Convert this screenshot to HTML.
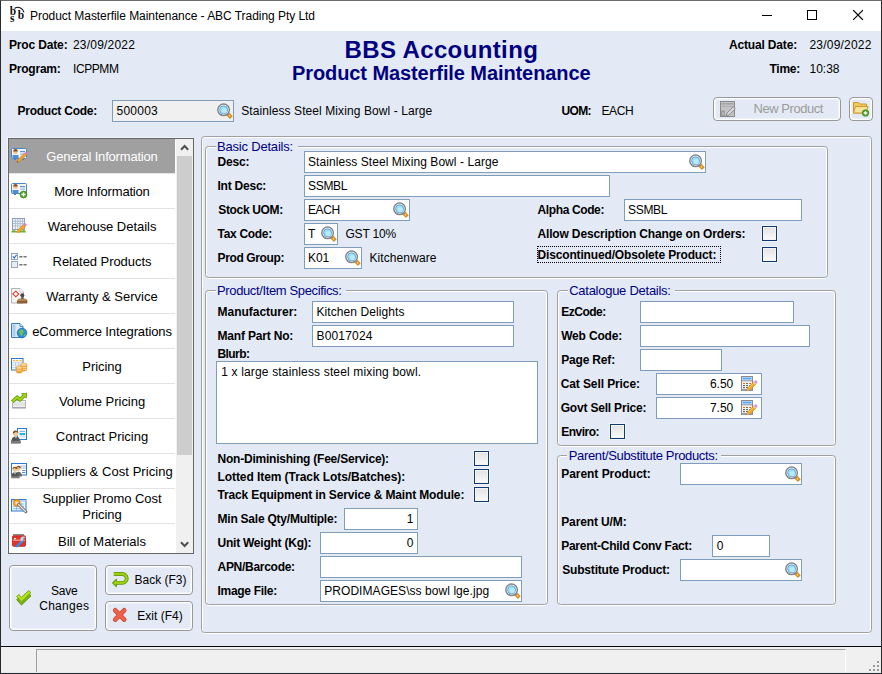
<!DOCTYPE html>
<html lang="en"><head><meta charset="utf-8"><title>Product Masterfile Maintenance - ABC Trading Pty Ltd</title>
<style>
html,body{margin:0;padding:0}
body{width:882px;height:674px;overflow:hidden;background:#E3EAF5;font-family:"Liberation Sans", sans-serif;position:relative}
#win{z-index:0;position:absolute;left:0;top:0;width:882px;height:674px;background:#E3EAF5;overflow:hidden}
#win>*{position:absolute}
#frame{left:0;top:0;width:880px;height:672px;border:1px solid #2a2a2a;border-top-color:#6a6a6a;box-sizing:content-box;pointer-events:none;z-index:9}
#tb{left:1px;top:1px;width:880px;height:30px;background:#fff}
.t{white-space:pre;margin:0}
.ic{overflow:visible}
.inp{box-sizing:border-box;background:#fff;border:1px solid #7F9DB9}
.btn{box-sizing:border-box;border:1px solid #989898;border-radius:4px;background:#E3EAF5;box-shadow:inset 0 0 0 1px #fff,inset 0 0 0 2px rgba(255,255,255,.35)}
.chk{box-sizing:border-box;width:15px;height:15px;border:1px solid #103A6E;background:linear-gradient(180deg,#E2E2E2,#FAFAFA);box-shadow:inset 0 0 0 1px #F7F3EF,0 0 0 1px rgba(255,255,255,.4)}
.grp{box-sizing:border-box;border:1px solid #A0A0A0;border-radius:3.5px}
.grp::before{content:"";position:absolute;left:0;top:0;right:0;bottom:-2px;border:1px solid #fff;border-radius:2.5px;z-index:-1}
.lgbg{height:2px;background:#E3EAF5}
.focus{box-sizing:border-box;border:1px dotted #000}
#list{left:8px;top:138px;width:186px;height:416px;box-sizing:border-box;border:1px solid #666;background:#fff;box-shadow:-1px -1px 0 0 #F1F5FA}
.row{left:9px;width:166px;background:#fff}
.row.sel{background:#A0A0A0}
.sep{left:9px;width:166px;height:1px;background:#E3E3E3}
#sb{left:176px;top:139px;width:17px;height:414px;background:#F0F0F0}
#thumb{left:177px;top:156px;width:15px;height:299px;background:#CDCDCD}
#status{left:1px;top:646px;width:880px;height:26px;background:#F0F0F0;border-top:1px solid #0a0a0a;box-sizing:border-box}
#stpanel{left:36px;top:649px;width:810px;height:23px;box-sizing:border-box;border-left:1px solid #A0A0A0;border-top:1px solid #A0A0A0;border-right:1px solid #fff}
</style></head>
<body><div id="win">
<div id="tb"></div>
<svg class="ic" style="left:8px;top:4px" width="20" height="22" viewBox="0 0 20 22" font-family="Liberation Serif, serif" font-weight="bold" fill="#111"><text x="1.700" y="10.800" font-size="11.500">b</text><text x="2" y="17.900" font-size="11.500">s</text><text x="9.700" y="14.900" font-size="11.500">b</text><path d="M6.500 4.500C10 2 14.500 3.500 16 8.300" fill="none" stroke="#111" stroke-width="1.100"/></svg>
<svg class="ic" style="left:755px;top:5px" width="120" height="22" viewBox="0 0 120 22"><path d="M7 10.500h10" stroke="#000" stroke-width="1"/><rect x="52.500" y="5.500" width="9" height="9" fill="none" stroke="#000"/><path d="M98.500 5.500l9 9M107.500 5.500l-9 9" stroke="#000" stroke-width="1.100" stroke-linecap="square"/></svg>
<div class="inp" style="left:112px;top:100px;width:122px;height:22px;background:#F0F0F0"></div>
<svg class="ic" style="left:217px;top:103px" width="16" height="16" viewBox="0 0 16 16"><path d="M10 10.200l2 2" stroke="#C9D3E0" stroke-width="2.600"/><path d="M12.300 9.900l3 3.300-2.300 2.400-3.200-3.200z" fill="#D48A22" stroke="#C27A18" stroke-width="0.600" stroke-linejoin="round"/><path d="M12.200 11.600l1.500 1.500-.900.900-1.500-1.500z" fill="#FFCB5C"/><circle cx="6.600" cy="6.800" r="5.800" fill="#fff" stroke="#858585" stroke-width="1.500"/><circle cx="6.600" cy="6.800" r="4" fill="#9FDDF6" stroke="#4E9EE4" stroke-width="0.900"/><circle cx="7.300" cy="7.600" r="2.600" fill="#B4ECFA"/></svg>
<div class="btn" style="left:713px;top:97px;width:128px;height:24px"></div>
<svg class="ic" style="left:720px;top:101px" width="16" height="16" viewBox="0 0 16 16"><rect x="0.500" y="0.500" width="14" height="15" fill="#C4C4C4" stroke="#8A8A8A"/><rect x="1.500" y="2" width="12" height="1.600" fill="#A4A4A4"/><path d="M1.500 5.500h12" stroke="#B0B0B0"/><rect x="1" y="9.500" width="4" height="5.500" fill="#9A9A9A"/><rect x="2.200" y="11" width="2" height="3" fill="#B8B8B8"/><path d="M6.200 15l.900-3 6.200-6.200 2 2-6.200 6.200z" fill="#D8D8D8" stroke="#7A7A7A" stroke-width="0.800"/></svg>
<div class="btn" style="left:849px;top:97px;width:24px;height:24px"></div>
<svg class="ic" style="left:853px;top:101px" width="17" height="16" viewBox="0 0 17 16"><path d="M0.500 1.500h5l1.500 1.500h6.500v9h-13z" fill="#F2C65A" stroke="#C99A2E"/><path d="M0.500 12l2-6.500h12.500l-2 6.500z" fill="#FBE29A" stroke="#C99A2E"/><circle cx="12.500" cy="12" r="3.300" fill="#4CA421" stroke="#2F7D12" stroke-width="0.600"/><path d="M10.700 12h3.600M12.500 10.200v3.600" stroke="#fff" stroke-width="1.300"/></svg>
<div id="list"></div>
<div class="row sel" style="top:139px;height:34px"></div>
<div class="sep" style="top:173px"></div>
<svg class="ic" style="left:11px;top:147px" width="16" height="16" viewBox="0 0 16 16"><rect x="0.5" y="1.5" width="15" height="10" rx="1" fill="#F2F7FD" stroke="#4A86C8"/><rect x="1.5" y="8" width="6" height="3.5" fill="#4F8DD6"/><circle cx="4.5" cy="5" r="2.3" fill="#F3C79B"/><path d="M2.2 4.4a2.3 2.3 0 0 1 4.6 0z" fill="#8A4B1F"/><rect x="9" y="4" width="5" height="1.2" fill="#5E8FCB"/><rect x="9" y="6.5" width="5" height="1.2" fill="#9DB9DC"/><rect x="3" y="11.5" width="2" height="1.5" fill="#4A86C8"/><rect x="11" y="11.5" width="2" height="1.5" fill="#4A86C8"/><path d="M6 15.5l.9-3 6.3-6.3 2.1 2.1L9 14.6z" fill="#F0A22E" stroke="#B87515" stroke-width="0.5"/><path d="M13.2 6.2l.9-.9a1 1 0 0 1 1.4 0l.5.5a1 1 0 0 1 0 1.4l-.9.9z" fill="#E77FC0"/><path d="M6 15.5l.45-1.5 1.05 1.05z" fill="#553"/></svg>
<div class="row" style="top:174px;height:34px"></div>
<div class="sep" style="top:208px"></div>
<svg class="ic" style="left:11px;top:182px" width="16" height="16" viewBox="0 0 16 16"><rect x="0.5" y="1.5" width="15" height="10" rx="1" fill="#F2F7FD" stroke="#4A86C8"/><rect x="1.5" y="8" width="6" height="3.5" fill="#4F8DD6"/><circle cx="4.5" cy="5" r="2.3" fill="#F3C79B"/><path d="M2.2 4.4a2.3 2.3 0 0 1 4.6 0z" fill="#8A4B1F"/><rect x="9" y="4" width="5" height="1.2" fill="#5E8FCB"/><rect x="9" y="6.5" width="5" height="1.2" fill="#9DB9DC"/><rect x="3" y="11.5" width="2" height="1.5" fill="#4A86C8"/><rect x="11" y="11.5" width="2" height="1.5" fill="#4A86C8"/><circle cx="12.5" cy="12.5" r="3.5" fill="#4CA421" stroke="#2F7D12" stroke-width="0.6"/><path d="M10.5 12.5h4M12.5 10.5v4" stroke="#fff" stroke-width="1.4"/></svg>
<div class="row" style="top:209px;height:34px"></div>
<div class="sep" style="top:243px"></div>
<svg class="ic" style="left:11px;top:217px" width="16" height="16" viewBox="0 0 16 16"><rect x="1.500" y="1.500" width="12" height="11" fill="#F4F7FC" stroke="#8CA0BC"/><path d="M2 4.200h11M2 6.600h11M2 9h11M4.400 2v10M6.800 2v10M9.200 2v10M11.600 2v10" stroke="#A8B8D4" stroke-width="0.900"/><path d="M0.300 15.400c.500-2.600 3-3 4.500-1.500l6 0c1.500-1.500 3.700-1 4.200 1.500z" fill="#6DB33A"/><path d="M6 15.900l.800-2.800 5.700-5.700 2 2-5.700 5.700z" fill="#F6A21E" stroke="#C87A10" stroke-width="0.500"/><path d="M12.500 7.400l.900-.900a1 1 0 0 1 1.400 0l.600.600a1 1 0 0 1 0 1.400l-.900.900z" fill="#E07FCC"/><path d="M6 15.900l.450-1.600 1.150 1.150z" fill="#E8C89A"/></svg>
<div class="row" style="top:244px;height:34px"></div>
<div class="sep" style="top:278px"></div>
<svg class="ic" style="left:11px;top:252px" width="16" height="16" viewBox="0 0 16 16"><rect x="0.500" y="1.500" width="6" height="6" fill="#fff" stroke="#8FA2BE"/><path d="M1.700 4.400l1.500 1.600 2.400-3.200" fill="none" stroke="#2E6FD0" stroke-width="1.200"/><rect x="0.500" y="9.500" width="6" height="6" fill="#E8EDF5" stroke="#9AA8BE"/><rect x="8.300" y="4" width="3.200" height="1.500" fill="#777"/><rect x="12.500" y="4" width="3.200" height="1.500" fill="#777"/><rect x="8.300" y="12" width="3.200" height="1.500" fill="#777"/><rect x="12.500" y="12" width="3.200" height="1.500" fill="#777"/></svg>
<div class="row" style="top:279px;height:34px"></div>
<div class="sep" style="top:313px"></div>
<svg class="ic" style="left:11px;top:287px" width="16" height="16" viewBox="0 0 16 16"><path d="M0.500 1.500h8.500l3.500 3.500v11h-12z" fill="#F4F4F4" stroke="#B4B4B4"/><path d="M9 1.500v3.500h3.500" fill="#fff" stroke="#C4C4C4" stroke-width="0.800"/><path d="M1.800 7l3-2.800 3 2.800-3 2.800z" fill="#fff" stroke="#E03A2E" stroke-width="1.100"/><circle cx="11.300" cy="8.300" r="2" fill="#4A4A4A"/><rect x="10.300" y="9" width="2" height="3.500" fill="#555"/><path d="M6.500 14.200c0-1.600 1.200-2.200 2.500-2.200h4.600c1.300 0 2.500.600 2.500 2.200z" fill="#C99560" stroke="#8A5A2A" stroke-width="0.600"/><rect x="6.200" y="14.200" width="9.800" height="1.900" fill="#9A6A38" stroke="#6A4520" stroke-width="0.500"/></svg>
<div class="row" style="top:314px;height:34px"></div>
<div class="sep" style="top:348px"></div>
<svg class="ic" style="left:11px;top:322px" width="16" height="16" viewBox="0 0 16 16"><path d="M0.500 1.500h8.500l3 3v11h-11.500z" fill="#DCEBFA" stroke="#3A7CC4"/><rect x="1.500" y="2.500" width="3" height="12" fill="#A9CDEE"/><path d="M9 1.500v3h3" fill="#F4FAFF" stroke="#3A7CC4" stroke-width="0.900"/><circle cx="11" cy="11" r="4.800" fill="#2E8CEA" stroke="#1E62B4" stroke-width="0.700"/><path d="M8.500 8.500c1.500-1.500 3.500-1 4 .500.500 1.500-1 2-1 3.500s-1.500 2-2 .500-2-2.500-1-4.500z" fill="#6CCB36"/><path d="M13.500 12.500c.800-.500 1.500.200 1 1.200s-1.500 1-1.500 0z" fill="#6CCB36"/></svg>
<div class="row" style="top:349px;height:34px"></div>
<div class="sep" style="top:383px"></div>
<svg class="ic" style="left:11px;top:357px" width="16" height="16" viewBox="0 0 16 16"><rect x="0.500" y="1.500" width="11.500" height="11.500" fill="#fff" stroke="#2C7AD0"/><rect x="2" y="3" width="2.200" height="1.300" fill="#F5B040"/><rect x="5.200" y="3" width="2.200" height="1.300" fill="#F5B040"/><rect x="8.400" y="3" width="2.200" height="1.300" fill="#F5B040"/><path d="M1 5.800h10.500M1 8.200h10.500M1 10.600h10.500M4.600 4.800v8M7.800 4.800v8" stroke="#A9C8EC" stroke-width="0.800"/><rect x="9.700" y="6" width="6" height="8" rx="1.800" fill="#F5A030" stroke="#E0851A" stroke-width="0.500"/><path d="M10.200 8.600h5M10.200 10.600h5M10.200 12.400h5" stroke="#FFE0B0" stroke-width="0.800"/><ellipse cx="12.700" cy="7" rx="2.600" ry="0.900" fill="#FFD590"/><rect x="5.200" y="9.200" width="6" height="6.800" rx="1.800" fill="#F5A030" stroke="#E0851A" stroke-width="0.500"/><path d="M5.700 11.800h5M5.700 13.700h5" stroke="#FFE0B0" stroke-width="0.800"/><ellipse cx="8.200" cy="10.200" rx="2.600" ry="0.900" fill="#FFD590"/></svg>
<div class="row" style="top:384px;height:34px"></div>
<div class="sep" style="top:418px"></div>
<svg class="ic" style="left:11px;top:392px" width="16" height="16" viewBox="0 0 16 16"><rect x="1.500" y="8.500" width="13" height="7.500" fill="#F4F4F4" stroke="#B8B8B8"/><path d="M2 11h12M2 13h12" stroke="#D0D0D0" stroke-width="0.900"/><rect x="1.500" y="15" width="13" height="1.300" fill="#A8A8A8"/><path d="M1.200 9.800l5-4.600 2.800 2.600 4.200-4.300" fill="none" stroke="#5E9208" stroke-width="3.600" stroke-linejoin="round"/><path d="M10 1.200l6-.400-.400 6z" fill="#5E9208"/><path d="M1.200 9.800l5-4.600 2.800 2.600 4.200-4.300" fill="none" stroke="#A4D816" stroke-width="2" stroke-linejoin="round"/><path d="M11.300 1.800l3.900-.300-.300 3.900z" fill="#A4D816"/></svg>
<div class="row" style="top:419px;height:34px"></div>
<div class="sep" style="top:453px"></div>
<svg class="ic" style="left:11px;top:427px" width="16" height="16" viewBox="0 0 16 16"><rect x="6.500" y="1.500" width="9" height="11" fill="#fff" stroke="#2C7AD0"/><rect x="8.500" y="3.800" width="5.500" height="1.200" fill="#7AB8F0"/><rect x="8.500" y="6" width="5.500" height="2.200" fill="#28B0E8"/><rect x="8.500" y="9.400" width="5.500" height="1" fill="#B8D4F0"/><circle cx="4.700" cy="6.800" r="2.700" fill="#F0C898"/><path d="M1.900 6.600a2.800 2.800 0 0 1 5.600-.600c-1.500-.200-2-1-2.500-1.500-.800 1-2 1.800-3.100 2.100z" fill="#7A4818"/><path d="M0.500 14c0-3 1.800-4.400 4.200-4.400s4.200 1.400 4.200 4.400z" fill="#555"/><path d="M3.700 9.800l1 2.500 1-2.500z" fill="#fff"/><path d="M4.500 10.300h.500v2.500h-.500z" fill="#222"/><rect x="0.200" y="13.800" width="9.300" height="2.400" fill="#7C7C7C" stroke="#5A5A5A" stroke-width="0.500"/></svg>
<div class="row" style="top:454px;height:34px"></div>
<div class="sep" style="top:488px"></div>
<svg class="ic" style="left:11px;top:462px" width="16" height="16" viewBox="0 0 16 16"><rect x="0.500" y="1.500" width="15" height="11.500" fill="#fff" stroke="#2C7AD0"/><path d="M9.500 4h1.200M11.500 4h1.200M13.500 4h1.200M9.500 6h1.200M11.500 6h1.200M13.500 6h1.200M11 8.500h3.500M11 10.500h3.500" stroke="#5C94D6" stroke-width="1"/><circle cx="7.500" cy="6.500" r="2.300" fill="#EEC090"/><path d="M5.100 6.300a2.400 2.400 0 0 1 4.800-.300c-1.800 0-2.600-.800-3-1.200-.500.800-1 1.200-1.800 1.500z" fill="#7A4818"/><path d="M4.300 14.500c0-3.200 1.400-4.800 3.300-4.800s3.300 1.600 3.300 4.800z" fill="#666"/><circle cx="4" cy="7.500" r="2.400" fill="#F0C898"/><path d="M1.500 7.300a2.500 2.500 0 0 1 5-.300c-1.800 0-2.700-.800-3.100-1.300-.500.900-1.100 1.300-1.900 1.600z" fill="#8A5520"/><path d="M0.300 15c0-3.200 1.500-4.700 3.700-4.700s3.700 1.500 3.700 4.700z" fill="#555"/><path d="M3.200 10.500l.800 2 .800-2z" fill="#fff"/><rect x="0.200" y="14.300" width="8.500" height="2" fill="#7C7C7C"/></svg>
<div class="row" style="top:489px;height:34px"></div>
<div class="sep" style="top:523px"></div>
<svg class="ic" style="left:11px;top:497px" width="16" height="16" viewBox="0 0 16 16"><rect x="0.500" y="2.500" width="14.500" height="11.500" fill="#EAF3FC" stroke="#2C7AD0"/><rect x="1" y="3" width="13.500" height="2" fill="#BBD8F4"/><path d="M2 7h11M2 9.300h11M2 11.600h11M5.500 5.500v8M10 5.500v8" stroke="#7FB0E6" stroke-width="0.800"/><circle cx="5.800" cy="6" r="3" fill="#FFC040" stroke="#F08A10" stroke-width="1.300"/><circle cx="5.800" cy="6" r="1.300" fill="#D8E4F0"/><path d="M7.500 7.500l7.300 7.300" stroke="#707070" stroke-width="3" stroke-linecap="round"/><path d="M7.500 7.500l7 7" stroke="#E8E8E8" stroke-width="1.200" stroke-linecap="round"/></svg>
<div class="row" style="top:524px;height:29px"></div>
<svg class="ic" style="left:11px;top:532px" width="16" height="16" viewBox="0 0 16 16"><rect x="2" y="2" width="11" height="1.600" fill="#8A8A8A"/><rect x="1.500" y="3.800" width="13" height="10.500" rx="1" fill="#E2322A" stroke="#B81C14" stroke-width="0.800"/><rect x="2" y="7.600" width="12" height="1.200" fill="#F8A098"/><rect x="3" y="6" width="2" height="1.300" fill="#fff"/><path d="M6.200 14.200l5-5" stroke="#2E8CEA" stroke-width="2.600" stroke-linecap="round"/><path d="M10.500 9.800a3 3 0 1 1 4.200-4.200l-2 .500-.300 1.700z" fill="#D0D8E4" stroke="#8A94A4" stroke-width="0.600"/></svg>
<div id="sb"></div><div id="thumb"></div>
<svg class="ic" style="left:177px;top:139px" width="16" height="17" viewBox="0 0 16 17"><path d="M4 10.800l3.600-3.800 3.600 3.800" fill="none" stroke="#505050" stroke-width="2"/></svg>
<svg class="ic" style="left:177px;top:536px" width="16" height="17" viewBox="0 0 16 17"><path d="M4 6.200l3.600 3.800 3.600-3.800" fill="none" stroke="#505050" stroke-width="2"/></svg>
<div class="btn" style="left:9px;top:565px;width:88px;height:66px"></div>
<svg class="ic" style="left:16px;top:590px" width="16" height="16" viewBox="0 0 16 16"><path d="M0.700 9.700L2.700 7.700 5.500 10.400 12.700 3.700 15 5.800 5.500 15Z" fill="#7DB30C" stroke="#5B8C06" stroke-width="0.900" stroke-linejoin="round"/><path d="M0.700 6.500L2.700 4.500 5.500 7.200 12.700 0.600 15 2.700 5.500 11.800Z" fill="#B2E31A" stroke="#6FA50A" stroke-width="0.900" stroke-linejoin="round"/></svg>
<div class="btn" style="left:105px;top:565px;width:88px;height:30px"></div>
<svg class="ic" style="left:112px;top:572px" width="16" height="16" viewBox="0 0 16 16"><g fill="none" stroke-linejoin="round"><path d="M1.800 2H10.300A4.400 4.400 0 0 1 10.300 10.800H4" stroke="#5E9208" stroke-width="3.800"/><path d="M0.300 10.900L4.400 6.900V14.900Z" fill="#5E9208" stroke="#5E9208" stroke-width="0.800"/><path d="M1.800 2H10.300A4.400 4.400 0 0 1 10.300 10.800H4" stroke="#9CD010" stroke-width="2.400"/><path d="M1.200 10.900L4 8.200V13.600Z" fill="#9CD010"/></g></svg>
<div class="btn" style="left:105px;top:601px;width:88px;height:30px"></div>
<svg class="ic" style="left:112px;top:607px" width="16" height="16" viewBox="0 0 16 16"><g stroke-linecap="round"><path d="M3.200 3.300L12.200 12.600M12.200 3.300L3.200 12.600" stroke="#C8402C" stroke-width="4.600"/><path d="M3.200 3.300L12.200 12.600M12.200 3.300L3.200 12.600" stroke="#F0604A" stroke-width="3.200"/></g></svg>
<div class="grp" style="left:201px;top:136px;width:671px;height:497px"></div>
<div class="grp" style="left:205px;top:146px;width:623px;height:132px"></div>
<div class="lgbg" style="left:216px;top:146px;width:82px"></div>
<div class="grp" style="left:205px;top:290px;width:343px;height:315px"></div>
<div class="lgbg" style="left:216px;top:290px;width:130px"></div>
<div class="grp" style="left:557px;top:290px;width:279px;height:156px"></div>
<div class="lgbg" style="left:568px;top:290px;width:107px"></div>
<div class="grp" style="left:557px;top:455px;width:279px;height:150px"></div>
<div class="lgbg" style="left:567px;top:455px;width:154px"></div>
<div class="inp " style="left:304px;top:151px;width:402px;height:22px"></div>
<svg class="ic" style="left:689px;top:154px" width="16" height="16" viewBox="0 0 16 16"><path d="M10 10.200l2 2" stroke="#C9D3E0" stroke-width="2.600"/><path d="M12.300 9.900l3 3.300-2.300 2.400-3.200-3.200z" fill="#D48A22" stroke="#C27A18" stroke-width="0.600" stroke-linejoin="round"/><path d="M12.200 11.600l1.500 1.500-.900.900-1.500-1.500z" fill="#FFCB5C"/><circle cx="6.600" cy="6.800" r="5.800" fill="#fff" stroke="#858585" stroke-width="1.500"/><circle cx="6.600" cy="6.800" r="4" fill="#9FDDF6" stroke="#4E9EE4" stroke-width="0.900"/><circle cx="7.300" cy="7.600" r="2.600" fill="#B4ECFA"/></svg>
<div class="inp " style="left:304px;top:175px;width:306px;height:22px"></div>
<div class="inp " style="left:304px;top:199px;width:106px;height:22px"></div>
<svg class="ic" style="left:393px;top:202px" width="16" height="16" viewBox="0 0 16 16"><path d="M10 10.200l2 2" stroke="#C9D3E0" stroke-width="2.600"/><path d="M12.300 9.900l3 3.300-2.300 2.400-3.200-3.200z" fill="#D48A22" stroke="#C27A18" stroke-width="0.600" stroke-linejoin="round"/><path d="M12.200 11.600l1.500 1.500-.900.900-1.500-1.500z" fill="#FFCB5C"/><circle cx="6.600" cy="6.800" r="5.800" fill="#fff" stroke="#858585" stroke-width="1.500"/><circle cx="6.600" cy="6.800" r="4" fill="#9FDDF6" stroke="#4E9EE4" stroke-width="0.900"/><circle cx="7.300" cy="7.600" r="2.600" fill="#B4ECFA"/></svg>
<div class="inp " style="left:304px;top:223px;width:34px;height:22px"></div>
<svg class="ic" style="left:320.5px;top:226px" width="16" height="16" viewBox="0 0 16 16"><path d="M10 10.200l2 2" stroke="#C9D3E0" stroke-width="2.600"/><path d="M12.300 9.900l3 3.300-2.300 2.400-3.200-3.200z" fill="#D48A22" stroke="#C27A18" stroke-width="0.600" stroke-linejoin="round"/><path d="M12.200 11.600l1.500 1.500-.900.900-1.500-1.500z" fill="#FFCB5C"/><circle cx="6.600" cy="6.800" r="5.800" fill="#fff" stroke="#858585" stroke-width="1.500"/><circle cx="6.600" cy="6.800" r="4" fill="#9FDDF6" stroke="#4E9EE4" stroke-width="0.900"/><circle cx="7.300" cy="7.600" r="2.600" fill="#B4ECFA"/></svg>
<div class="inp " style="left:304px;top:247px;width:58px;height:22px"></div>
<svg class="ic" style="left:345px;top:250px" width="16" height="16" viewBox="0 0 16 16"><path d="M10 10.200l2 2" stroke="#C9D3E0" stroke-width="2.600"/><path d="M12.300 9.900l3 3.300-2.300 2.400-3.200-3.200z" fill="#D48A22" stroke="#C27A18" stroke-width="0.600" stroke-linejoin="round"/><path d="M12.200 11.600l1.500 1.500-.900.900-1.500-1.500z" fill="#FFCB5C"/><circle cx="6.600" cy="6.800" r="5.800" fill="#fff" stroke="#858585" stroke-width="1.500"/><circle cx="6.600" cy="6.800" r="4" fill="#9FDDF6" stroke="#4E9EE4" stroke-width="0.900"/><circle cx="7.300" cy="7.600" r="2.600" fill="#B4ECFA"/></svg>
<div class="inp " style="left:624px;top:199px;width:178px;height:22px"></div>
<div class="chk" style="left:762px;top:226px"></div>
<div class="focus" style="left:537px;top:246px;width:184px;height:17px"></div>
<div class="chk" style="left:762px;top:247px"></div>
<div class="inp " style="left:312px;top:301px;width:202px;height:22px"></div>
<div class="inp " style="left:312px;top:325px;width:202px;height:22px"></div>
<div class="inp " style="left:216px;top:361px;width:322px;height:83px"></div>
<div class="chk" style="left:474px;top:451px"></div>
<div class="chk" style="left:474px;top:469px"></div>
<div class="chk" style="left:474px;top:487px"></div>
<div class="inp " style="left:344px;top:508px;width:74px;height:22px"></div>
<div class="inp " style="left:320px;top:532px;width:98px;height:22px"></div>
<div class="inp " style="left:320px;top:556px;width:202px;height:22px"></div>
<div class="inp " style="left:320px;top:580px;width:202px;height:22px"></div>
<svg class="ic" style="left:505px;top:583px" width="16" height="16" viewBox="0 0 16 16"><path d="M10 10.200l2 2" stroke="#C9D3E0" stroke-width="2.600"/><path d="M12.300 9.900l3 3.300-2.300 2.400-3.200-3.200z" fill="#D48A22" stroke="#C27A18" stroke-width="0.600" stroke-linejoin="round"/><path d="M12.200 11.600l1.500 1.500-.900.900-1.500-1.500z" fill="#FFCB5C"/><circle cx="6.600" cy="6.800" r="5.800" fill="#fff" stroke="#858585" stroke-width="1.500"/><circle cx="6.600" cy="6.800" r="4" fill="#9FDDF6" stroke="#4E9EE4" stroke-width="0.900"/><circle cx="7.300" cy="7.600" r="2.600" fill="#B4ECFA"/></svg>
<div class="inp " style="left:640px;top:301px;width:154px;height:22px"></div>
<div class="inp " style="left:640px;top:325px;width:170px;height:22px"></div>
<div class="inp " style="left:640px;top:349px;width:82px;height:22px"></div>
<div class="inp " style="left:656px;top:373px;width:106px;height:22px"></div>
<svg class="ic" style="left:741px;top:376px" width="17" height="16" viewBox="0 0 17 16"><rect x="0.500" y="0.500" width="11" height="14" fill="#F6F6F6" stroke="#8C8C8C"/><rect x="1" y="13" width="10" height="1.500" fill="#A0A0A0"/><rect x="1" y="1" width="10" height="3.400" fill="#A9D1FF"/><rect x="1" y="4.400" width="10" height="0.900" fill="#8C8C8C"/><rect x="2" y="2.200" width="8" height="0.900" fill="#4E96E6"/><g><rect x="2" y="6.900" width="2" height="1.100" fill="#F4701C"/><rect x="5" y="6.900" width="2" height="1.100" fill="#707070"/><rect x="8" y="6.900" width="2" height="1.100" fill="#F4701C"/><rect x="2" y="9" width="2" height="1.100" fill="#606060"/><rect x="5" y="9" width="2" height="1.100" fill="#606060"/><rect x="8" y="9" width="2" height="1.100" fill="#3E96F0"/><rect x="2" y="11.100" width="2" height="1.100" fill="#606060"/><rect x="5" y="11.100" width="2" height="1.100" fill="#606060"/></g><path d="M6.100 14.700l.700-2.900 6-6 2.200 2.200-6 6z" fill="#F6A21E" stroke="#C87A10" stroke-width="0.500"/><path d="M7.600 12.500l5.300-5.300" stroke="#FFD36A" stroke-width="0.900"/><path d="M12.200 6.400l.900-.900 2.200 2.200-.900.900z" fill="#D8D8D8"/><path d="M13.100 5.500l.800-.800a1.100 1.100 0 0 1 1.500 0l.700.700a1.100 1.100 0 0 1 0 1.500l-.800.800z" fill="#E07FCC"/><path d="M6.100 14.700l.450-1.700 1.250 1.250z" fill="#E8C89A"/></svg>
<div class="inp " style="left:656px;top:397px;width:106px;height:22px"></div>
<svg class="ic" style="left:741px;top:400px" width="17" height="16" viewBox="0 0 17 16"><rect x="0.500" y="0.500" width="11" height="14" fill="#F6F6F6" stroke="#8C8C8C"/><rect x="1" y="13" width="10" height="1.500" fill="#A0A0A0"/><rect x="1" y="1" width="10" height="3.400" fill="#A9D1FF"/><rect x="1" y="4.400" width="10" height="0.900" fill="#8C8C8C"/><rect x="2" y="2.200" width="8" height="0.900" fill="#4E96E6"/><g><rect x="2" y="6.900" width="2" height="1.100" fill="#F4701C"/><rect x="5" y="6.900" width="2" height="1.100" fill="#707070"/><rect x="8" y="6.900" width="2" height="1.100" fill="#F4701C"/><rect x="2" y="9" width="2" height="1.100" fill="#606060"/><rect x="5" y="9" width="2" height="1.100" fill="#606060"/><rect x="8" y="9" width="2" height="1.100" fill="#3E96F0"/><rect x="2" y="11.100" width="2" height="1.100" fill="#606060"/><rect x="5" y="11.100" width="2" height="1.100" fill="#606060"/></g><path d="M6.100 14.700l.700-2.900 6-6 2.200 2.200-6 6z" fill="#F6A21E" stroke="#C87A10" stroke-width="0.500"/><path d="M7.600 12.500l5.300-5.300" stroke="#FFD36A" stroke-width="0.900"/><path d="M12.200 6.400l.900-.900 2.200 2.200-.900.900z" fill="#D8D8D8"/><path d="M13.100 5.500l.800-.800a1.100 1.100 0 0 1 1.500 0l.700.700a1.100 1.100 0 0 1 0 1.500l-.800.800z" fill="#E07FCC"/><path d="M6.100 14.700l.450-1.700 1.250 1.250z" fill="#E8C89A"/></svg>
<div class="chk" style="left:610px;top:424px"></div>
<div class="inp " style="left:680px;top:463px;width:122px;height:22px"></div>
<svg class="ic" style="left:785px;top:466px" width="16" height="16" viewBox="0 0 16 16"><path d="M10 10.200l2 2" stroke="#C9D3E0" stroke-width="2.600"/><path d="M12.300 9.900l3 3.300-2.300 2.400-3.200-3.200z" fill="#D48A22" stroke="#C27A18" stroke-width="0.600" stroke-linejoin="round"/><path d="M12.200 11.600l1.500 1.500-.900.900-1.500-1.500z" fill="#FFCB5C"/><circle cx="6.600" cy="6.800" r="5.800" fill="#fff" stroke="#858585" stroke-width="1.500"/><circle cx="6.600" cy="6.800" r="4" fill="#9FDDF6" stroke="#4E9EE4" stroke-width="0.900"/><circle cx="7.300" cy="7.600" r="2.600" fill="#B4ECFA"/></svg>
<div class="inp " style="left:712px;top:535px;width:58px;height:22px"></div>
<div class="inp " style="left:680px;top:559px;width:122px;height:22px"></div>
<svg class="ic" style="left:785px;top:562px" width="16" height="16" viewBox="0 0 16 16"><path d="M10 10.200l2 2" stroke="#C9D3E0" stroke-width="2.600"/><path d="M12.300 9.900l3 3.300-2.300 2.400-3.200-3.200z" fill="#D48A22" stroke="#C27A18" stroke-width="0.600" stroke-linejoin="round"/><path d="M12.200 11.600l1.500 1.500-.900.900-1.500-1.500z" fill="#FFCB5C"/><circle cx="6.600" cy="6.800" r="5.800" fill="#fff" stroke="#858585" stroke-width="1.500"/><circle cx="6.600" cy="6.800" r="4" fill="#9FDDF6" stroke="#4E9EE4" stroke-width="0.900"/><circle cx="7.300" cy="7.600" r="2.600" fill="#B4ECFA"/></svg>
<div id="status"></div><div id="stpanel"></div>
<svg class="ic" style="left:868px;top:660px" width="13" height="13" viewBox="0 0 13 13"><g fill="#9A9A9A"><rect x="9" y="1" width="2" height="2"/><rect x="5" y="5" width="2" height="2"/><rect x="9" y="5" width="2" height="2"/><rect x="1" y="9" width="2" height="2"/><rect x="5" y="9" width="2" height="2"/><rect x="9" y="9" width="2" height="2"/></g></svg>
<div class="t" id="t0" style="top:9px;height:14px;line-height:14px;font-size:12px;color:#000;letter-spacing:-0.048px;left:30px;">Product Masterfile Maintenance - ABC Trading Pty Ltd</div>
<div class="t" id="t1" style="top:38px;height:14px;line-height:14px;font-size:12px;color:#000;font-weight:bold;letter-spacing:-0.153px;left:9px;">Proc Date:</div>
<div class="t" id="t2" style="top:38px;height:14px;line-height:14px;font-size:12px;color:#000;letter-spacing:0.194px;left:73px;">23/09/2022</div>
<div class="t" id="t3" style="top:62px;height:14px;line-height:14px;font-size:12px;color:#000;font-weight:bold;letter-spacing:-0.218px;left:9px;">Program:</div>
<div class="t" id="t4" style="top:62px;height:14px;line-height:14px;font-size:12px;color:#000;letter-spacing:-0.417px;left:73px;">ICPPMM</div>
<div class="t" id="t5" style="top:36px;height:27px;line-height:27px;font-size:24px;color:#000080;font-weight:bold;transform:translateY(-0.5px);letter-spacing:0.376px;left:344.5px;">BBS Accounting</div>
<div class="t" id="t6" style="top:62px;height:22px;line-height:22px;font-size:20px;color:#000080;font-weight:bold;transform:translateY(-0.5px);letter-spacing:-0.090px;left:292px;">Product Masterfile Maintenance</div>
<div class="t" id="t7" style="top:38px;height:14px;line-height:14px;font-size:12px;color:#000;font-weight:bold;letter-spacing:-0.168px;left:729px;">Actual Date:</div>
<div class="t" id="t8" style="top:38px;height:14px;line-height:14px;font-size:12px;color:#000;letter-spacing:0.194px;left:809.5px;">23/09/2022</div>
<div class="t" id="t9" style="top:62px;height:14px;line-height:14px;font-size:12px;color:#000;font-weight:bold;letter-spacing:-0.259px;left:769.5px;">Time:</div>
<div class="t" id="t10" style="top:62px;height:14px;line-height:14px;font-size:12px;color:#000;letter-spacing:-0.006px;left:809.5px;">10:38</div>
<div class="t" id="t11" style="top:104px;height:14px;line-height:14px;font-size:12px;color:#000;font-weight:bold;letter-spacing:-0.244px;left:17.5px;">Product Code:</div>
<div class="t" id="t12" style="top:104px;height:14px;line-height:14px;font-size:12px;color:#000;letter-spacing:0.242px;left:116.5px;">500003</div>
<div class="t" id="t13" style="top:104px;height:14px;line-height:14px;font-size:12px;color:#000;letter-spacing:0.083px;left:241.25px;">Stainless Steel Mixing Bowl - Large</div>
<div class="t" id="t14" style="top:104px;height:14px;line-height:14px;font-size:12px;color:#000;font-weight:bold;letter-spacing:-0.650px;left:561.5px;">UOM:</div>
<div class="t" id="t15" style="top:104px;height:14px;line-height:14px;font-size:12px;color:#000;letter-spacing:-0.361px;left:601.4px;">EACH</div>
<div class="t" id="t16" style="top:101px;height:15px;line-height:15px;font-size:13px;color:#9B9B9B;letter-spacing:-0.457px;left:753.5px;">New Product</div>
<div class="t" id="t17" style="top:149px;height:15px;line-height:15px;font-size:13px;color:#fff;letter-spacing:-0.190px;left:-48px;width:300px;text-align:center;">General Information</div>
<div class="t" id="t18" style="top:184px;height:15px;line-height:15px;font-size:13px;color:#000;letter-spacing:-0.185px;left:-48px;width:300px;text-align:center;">More Information</div>
<div class="t" id="t19" style="top:219px;height:15px;line-height:15px;font-size:13px;color:#000;letter-spacing:-0.039px;left:-48px;width:300px;text-align:center;">Warehouse Details</div>
<div class="t" id="t20" style="top:254px;height:15px;line-height:15px;font-size:13px;color:#000;letter-spacing:-0.052px;left:-48px;width:300px;text-align:center;">Related Products</div>
<div class="t" id="t21" style="top:289px;height:15px;line-height:15px;font-size:13px;color:#000;letter-spacing:-0.011px;left:-48px;width:300px;text-align:center;">Warranty &amp; Service</div>
<div class="t" id="t22" style="top:324px;height:15px;line-height:15px;font-size:13px;color:#000;letter-spacing:-0.120px;left:-48px;width:300px;text-align:center;">eCommerce Integrations</div>
<div class="t" id="t23" style="top:359px;height:15px;line-height:15px;font-size:13px;color:#000;letter-spacing:-0.036px;left:-48px;width:300px;text-align:center;">Pricing</div>
<div class="t" id="t24" style="top:394px;height:15px;line-height:15px;font-size:13px;color:#000;letter-spacing:-0.037px;left:-48px;width:300px;text-align:center;">Volume Pricing</div>
<div class="t" id="t25" style="top:429px;height:15px;line-height:15px;font-size:13px;color:#000;letter-spacing:-0.005px;left:-48px;width:300px;text-align:center;">Contract Pricing</div>
<div class="t" id="t26" style="top:464px;height:15px;line-height:15px;font-size:13px;color:#000;letter-spacing:0.060px;left:-48px;width:300px;text-align:center;">Suppliers &amp; Cost Pricing</div>
<div class="t" id="t27" style="top:491px;height:15px;line-height:15px;font-size:13px;color:#000;letter-spacing:-0.045px;left:-48px;width:300px;text-align:center;">Supplier Promo Cost</div>
<div class="t" id="t28" style="top:507px;height:15px;line-height:15px;font-size:13px;color:#000;letter-spacing:-0.036px;left:-48px;width:300px;text-align:center;">Pricing</div>
<div class="t" id="t29" style="top:534px;height:15px;line-height:15px;font-size:13px;color:#000;letter-spacing:-0.020px;left:-48px;width:300px;text-align:center;">Bill of Materials</div>
<div class="t" id="t30" style="top:584px;height:14px;line-height:14px;font-size:12px;color:#000;letter-spacing:-0.290px;left:-85.8px;width:300px;text-align:center;">Save</div>
<div class="t" id="t31" style="top:599px;height:14px;line-height:14px;font-size:12px;color:#000;letter-spacing:0.265px;left:-85.8px;width:300px;text-align:center;">Changes</div>
<div class="t" id="t32" style="top:573px;height:14px;line-height:14px;font-size:12px;color:#000;left:10.5px;width:300px;text-align:center;">Back (F3)</div>
<div class="t" id="t33" style="top:609px;height:14px;line-height:14px;font-size:12px;color:#000;left:10px;width:300px;text-align:center;">Exit (F4)</div>
<div class="t" id="t34" style="top:139px;height:15px;line-height:15px;font-size:13px;color:#000080;letter-spacing:-0.196px;left:217px;">Basic Details:</div>
<div class="t" id="t35" style="top:283px;height:15px;line-height:15px;font-size:13px;color:#000080;letter-spacing:-0.368px;left:217px;">Product/Item Specifics:</div>
<div class="t" id="t36" style="top:283px;height:15px;line-height:15px;font-size:13px;color:#000080;letter-spacing:-0.263px;left:569.2px;">Catalogue Details:</div>
<div class="t" id="t37" style="top:448px;height:15px;line-height:15px;font-size:13px;color:#000080;letter-spacing:-0.343px;left:568.7px;">Parent/Substitute Products:</div>
<div class="t" id="t38" style="top:155px;height:14px;line-height:14px;font-size:12px;color:#000;font-weight:bold;letter-spacing:-0.198px;left:217.5px;">Desc:</div>
<div class="t" id="t39" style="top:179px;height:14px;line-height:14px;font-size:12px;color:#000;font-weight:bold;letter-spacing:-0.232px;left:217.5px;">Int Desc:</div>
<div class="t" id="t40" style="top:203px;height:14px;line-height:14px;font-size:12px;color:#000;font-weight:bold;letter-spacing:-0.342px;left:218.25px;">Stock UOM:</div>
<div class="t" id="t41" style="top:227px;height:14px;line-height:14px;font-size:12px;color:#000;font-weight:bold;letter-spacing:-0.303px;left:217.5px;">Tax Code:</div>
<div class="t" id="t42" style="top:251px;height:14px;line-height:14px;font-size:12px;color:#000;font-weight:bold;letter-spacing:-0.370px;left:217.5px;">Prod Group:</div>
<div class="t" id="t43" style="top:155px;height:14px;line-height:14px;font-size:12px;color:#000;letter-spacing:0.069px;left:308px;">Stainless Steel Mixing Bowl - Large</div>
<div class="t" id="t44" style="top:179px;height:14px;line-height:14px;font-size:12px;color:#000;letter-spacing:-0.297px;left:308px;">SSMBL</div>
<div class="t" id="t45" style="top:203px;height:14px;line-height:14px;font-size:12px;color:#000;letter-spacing:-0.411px;left:308px;">EACH</div>
<div class="t" id="t46" style="top:227px;height:14px;line-height:14px;font-size:12px;color:#000;left:308px;">T</div>
<div class="t" id="t47" style="top:227px;height:14px;line-height:14px;font-size:12px;color:#000;letter-spacing:-0.173px;left:345.4px;">GST 10%</div>
<div class="t" id="t48" style="top:251px;height:14px;line-height:14px;font-size:12px;color:#000;letter-spacing:-0.053px;left:308px;">K01</div>
<div class="t" id="t49" style="top:251px;height:14px;line-height:14px;font-size:12px;color:#000;letter-spacing:0.087px;left:369.5px;">Kitchenware</div>
<div class="t" id="t50" style="top:203px;height:14px;line-height:14px;font-size:12px;color:#000;font-weight:bold;letter-spacing:-0.379px;left:537.5px;">Alpha Code:</div>
<div class="t" id="t51" style="top:203px;height:14px;line-height:14px;font-size:12px;color:#000;letter-spacing:-0.297px;left:628px;">SSMBL</div>
<div class="t" id="t52" style="top:227px;height:14px;line-height:14px;font-size:12px;color:#000;font-weight:bold;letter-spacing:-0.160px;left:537.5px;">Allow Description Change on Orders:</div>
<div class="t" id="t53" style="top:248px;height:14px;line-height:14px;font-size:12px;color:#000;font-weight:bold;letter-spacing:-0.154px;left:537.5px;">Discontinued/Obsolete Product:</div>
<div class="t" id="t54" style="top:305px;height:14px;line-height:14px;font-size:12px;color:#000;font-weight:bold;letter-spacing:-0.017px;left:217.5px;">Manufacturer:</div>
<div class="t" id="t55" style="top:305px;height:14px;line-height:14px;font-size:12px;color:#000;letter-spacing:0.080px;left:316.5px;">Kitchen Delights</div>
<div class="t" id="t56" style="top:329px;height:14px;line-height:14px;font-size:12px;color:#000;font-weight:bold;letter-spacing:-0.185px;left:217.5px;">Manf Part No:</div>
<div class="t" id="t57" style="top:329px;height:14px;line-height:14px;font-size:12px;color:#000;letter-spacing:0.171px;left:316.5px;">B0017024</div>
<div class="t" id="t58" style="top:347px;height:14px;line-height:14px;font-size:12px;color:#000;font-weight:bold;letter-spacing:-0.571px;left:217.5px;">Blurb:</div>
<div class="t" id="t59" style="top:365px;height:14px;line-height:14px;font-size:12px;color:#000;letter-spacing:0.155px;left:221.25px;">1 x large stainless steel mixing bowl.</div>
<div class="t" id="t60" style="top:452px;height:14px;line-height:14px;font-size:12px;color:#000;font-weight:bold;letter-spacing:-0.221px;left:217.5px;">Non-Diminishing (Fee/Service):</div>
<div class="t" id="t61" style="top:470px;height:14px;line-height:14px;font-size:12px;color:#000;font-weight:bold;letter-spacing:-0.074px;left:217.5px;">Lotted Item (Track Lots/Batches):</div>
<div class="t" id="t62" style="top:488px;height:14px;line-height:14px;font-size:12px;color:#000;font-weight:bold;letter-spacing:-0.142px;left:217.5px;">Track Equipment in Service &amp; Maint Module:</div>
<div class="t" id="t63" style="top:512px;height:14px;line-height:14px;font-size:12px;color:#000;font-weight:bold;letter-spacing:-0.227px;left:217.5px;">Min Sale Qty/Multiple:</div>
<div class="t" id="t64" style="top:512px;height:14px;line-height:14px;font-size:12px;color:#000;right:468.5px;">1</div>
<div class="t" id="t65" style="top:536px;height:14px;line-height:14px;font-size:12px;color:#000;font-weight:bold;letter-spacing:-0.233px;left:217.5px;">Unit Weight (Kg):</div>
<div class="t" id="t66" style="top:536px;height:14px;line-height:14px;font-size:12px;color:#000;right:468.5px;">0</div>
<div class="t" id="t67" style="top:560px;height:14px;line-height:14px;font-size:12px;color:#000;font-weight:bold;letter-spacing:-0.282px;left:217.5px;">APN/Barcode:</div>
<div class="t" id="t68" style="top:584px;height:14px;line-height:14px;font-size:12px;color:#000;font-weight:bold;letter-spacing:-0.299px;left:217.5px;">Image File:</div>
<div class="t" id="t69" style="top:584px;height:14px;line-height:14px;font-size:12px;color:#000;letter-spacing:0.062px;left:324.2px;">PRODIMAGES\ss bowl lge.jpg</div>
<div class="t" id="t70" style="top:305px;height:14px;line-height:14px;font-size:12px;color:#000;font-weight:bold;letter-spacing:-0.486px;left:561.2px;">EzCode:</div>
<div class="t" id="t71" style="top:329px;height:14px;line-height:14px;font-size:12px;color:#000;font-weight:bold;letter-spacing:-0.184px;left:561.2px;">Web Code:</div>
<div class="t" id="t72" style="top:353px;height:14px;line-height:14px;font-size:12px;color:#000;font-weight:bold;letter-spacing:-0.173px;left:561.2px;">Page Ref:</div>
<div class="t" id="t73" style="top:377px;height:14px;line-height:14px;font-size:12px;color:#000;font-weight:bold;letter-spacing:-0.100px;left:560.7px;">Cat Sell Price:</div>
<div class="t" id="t74" style="top:377px;height:14px;line-height:14px;font-size:12px;color:#000;right:148.75px;">6.50</div>
<div class="t" id="t75" style="top:401px;height:14px;line-height:14px;font-size:12px;color:#000;font-weight:bold;letter-spacing:-0.194px;left:560.7px;">Govt Sell Price:</div>
<div class="t" id="t76" style="top:401px;height:14px;line-height:14px;font-size:12px;color:#000;right:148.75px;">7.50</div>
<div class="t" id="t77" style="top:425px;height:14px;line-height:14px;font-size:12px;color:#000;font-weight:bold;letter-spacing:-0.492px;left:561.2px;">Enviro:</div>
<div class="t" id="t78" style="top:467px;height:14px;line-height:14px;font-size:12px;color:#000;font-weight:bold;letter-spacing:-0.034px;left:561.2px;">Parent Product:</div>
<div class="t" id="t79" style="top:515px;height:14px;line-height:14px;font-size:12px;color:#000;font-weight:bold;letter-spacing:-0.117px;left:561.2px;">Parent U/M:</div>
<div class="t" id="t80" style="top:539px;height:14px;line-height:14px;font-size:12px;color:#000;font-weight:bold;letter-spacing:-0.256px;left:561.2px;">Parent-Child Conv Fact:</div>
<div class="t" id="t81" style="top:539px;height:14px;line-height:14px;font-size:12px;color:#000;left:716.75px;">0</div>
<div class="t" id="t82" style="top:563px;height:14px;line-height:14px;font-size:12px;color:#000;font-weight:bold;letter-spacing:-0.196px;left:562.3px;">Substitute Product:</div>
<div id="frame"></div>
</div></body></html>
